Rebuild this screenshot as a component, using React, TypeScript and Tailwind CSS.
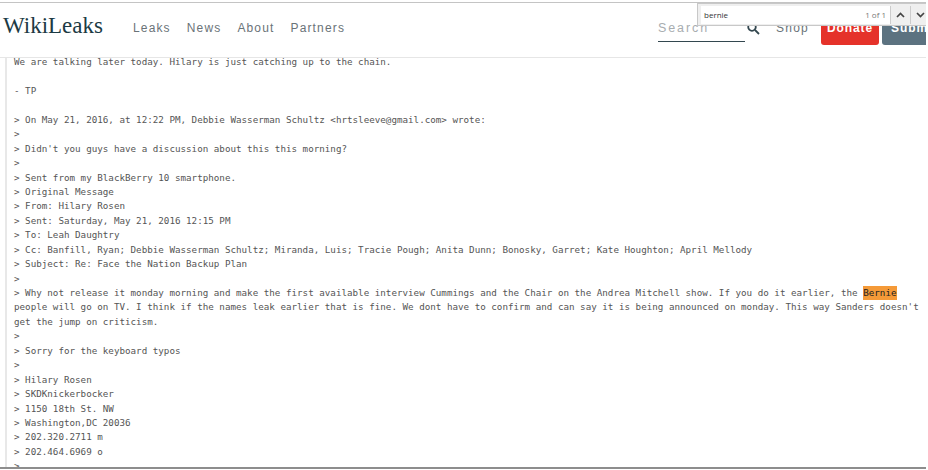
import React from "react";

const before = [
  "We are talking later today. Hilary is just catching up to the chain.",
  "",
  "- TP",
  "",
  "> On May 21, 2016, at 12:22 PM, Debbie Wasserman Schultz <hrtsleeve@gmail.com> wrote:",
  ">",
  "> Didn't you guys have a discussion about this this morning?",
  ">",
  "> Sent from my BlackBerry 10 smartphone.",
  "> Original Message",
  "> From: Hilary Rosen",
  "> Sent: Saturday, May 21, 2016 12:15 PM",
  "> To: Leah Daughtry",
  "> Cc: Banfill, Ryan; Debbie Wasserman Schultz; Miranda, Luis; Tracie Pough; Anita Dunn; Bonosky, Garret; Kate Houghton; April Mellody",
  "> Subject: Re: Face the Nation Backup Plan",
  ">",
];
const after = [
  ">",
  "> Sorry for the keyboard typos",
  ">",
  "> Hilary Rosen",
  "> SKDKnickerbocker",
  "> 1150 18th St. NW",
  "> Washington,DC 20036",
  "> 202.320.2711 m",
  "> 202.464.6969 o",
  ">",
];

function Line({ children }: { children?: React.ReactNode }) {
  return <div className="h-[14.45px] whitespace-pre">{children || " "}</div>;
}

export default function App() {
  return (
    <div className="relative h-[470px] w-[926px] overflow-hidden bg-white">
      <header className="mt-[2px] flex h-[56px] items-start border-y border-t-[#c4c4c4] border-b-[#e6e6e6] font-['Liberation_Sans',sans-serif]">
        <div className="ml-[3px] mt-[10px] w-[130px] shrink-0 font-['Liberation_Serif',serif] text-[23px] leading-[26px] text-[#1c3a44]">WikiLeaks</div>
        <nav className="mt-[16px] flex w-[211px] shrink-0 gap-[16px] text-[12px] leading-[18px] tracking-[1.15px] text-[#6a7378]">
          <span>Leaks</span>
          <span>News</span>
          <span>About</span>
          <span>Partners</span>
        </nav>
        <div className="ml-[314px] flex shrink-0 items-start">
          <div className="mt-[16px] h-[23px] w-[87px] border-b border-[#33474f] text-[12.5px] leading-[18px] tracking-[1.9px] text-[#a8adb0]">Search</div>
          <svg className="mt-[19px] ml-[2px] h-[13px] w-[13px] text-[#33474f]" viewBox="0 0 13 13" fill="none" stroke="currentColor" strokeWidth="1.8">
            <circle cx="5" cy="5" r="3.8" />
            <path d="M8 8l4 4" />
          </svg>
          <span className="mt-[16px] ml-[16px] text-[12px] leading-[18px] tracking-[1.25px] text-[#6a7378]">Shop</span>
          <div className="ml-[12px] flex h-[42px] w-[58px] shrink-0 items-end justify-center rounded-[3px] bg-[#e5322a] pb-[11px] text-[12px] font-bold leading-none tracking-[0.9px] text-white">Donate</div>
          <div className="ml-[3px] flex h-[42px] w-[60px] shrink-0 items-end rounded-[3px] bg-[#5c7280] pb-[11px] pl-[9px] text-[12px] font-bold leading-none tracking-[0.9px] text-white">Submit</div>
        </div>
      </header>

      <main className="ml-[5px] h-[409px] overflow-hidden border-l-2 border-[#e8e8e8] pl-[7px] font-['DejaVu_Sans_Mono','Liberation_Mono',monospace] text-[9.22px] leading-[14.45px] text-[#555]">
        <div className="-mt-[3px]">
          {before.map((l, i) => (
            <Line key={i}>{l}</Line>
          ))}
          <p className="w-[908px] break-words">
            {"> Why not release it monday morning and make the first available interview Cummings and the Chair on the Andrea Mitchell show. If you do it earlier, the "}
            <mark className="inline-block h-[14.45px] bg-[#f59a38] text-[#222]">Bernie</mark>
            {" people will go on TV. I think if the names leak earlier that is fine. We dont have to confirm and can say it is being announced on monday. This way Sanders doesn't get the jump on criticism."}
          </p>
          {after.map((l, i) => (
            <Line key={i}>{l}</Line>
          ))}
        </div>
      </main>
      <div className="h-[2px] bg-[#8d8d8d]" />

      <div className="absolute left-[697px] top-[3px] flex h-[23px] w-[229px] items-center border-y border-l border-[#c8c8c8] bg-[#efefef] pl-[3px] font-['Open_Sans',sans-serif] text-[8px] text-[#333]">
        <div className="flex h-[18px] w-[189px] shrink-0 items-center justify-between bg-white pl-[3px] pr-[4px]">
          <span>bernie</span>
          <span className="text-[#777]">1 of 1</span>
        </div>
        <div className="flex h-[18px] w-[20px] shrink-0 items-center justify-center border-l border-[#ccc]">
          <svg className="h-[6px] w-[9px]" viewBox="0 0 9 6" fill="none" stroke="#444" strokeWidth="1.7"><path d="M1 5l3.5-3.5L8 5" /></svg>
        </div>
        <div className="flex h-[18px] w-[16px] shrink-0 items-center justify-center border-l border-[#ccc] pl-[3px]">
          <svg className="h-[6px] w-[9px]" viewBox="0 0 9 6" fill="none" stroke="#444" strokeWidth="1.7"><path d="M1 1l3.5 3.5L8 1" /></svg>
        </div>
      </div>
    </div>
  );
}
